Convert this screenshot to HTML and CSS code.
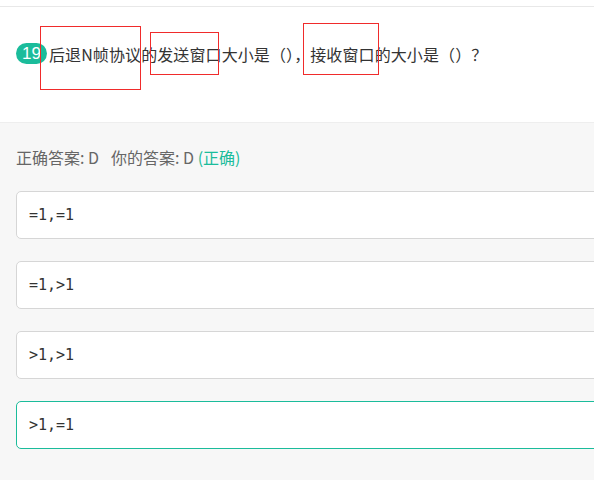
FILE: index.html
```html
<!doctype html>
<html>
  <head>
    <title>答题结果</title>
    <meta http-equiv="Content-Type" content="text/html; charset=utf-8" />
    <link rel="stylesheet" href="styles.css">
  </head>
  <body>
    <div id="page">
      <div class="question">
        <span class="num">19</span>
        <span class="title">后退N帧协议的发送窗口大小是（），接收窗口的大小是（）？</span>
      </div>
      <div class="result">
        <div class="summary">
          正确答案: D<span class="gap"></span>你的答案: D <span class="ok">(正确)</span>
        </div>
        <div class="option">=1,=1</div>
        <div class="option">=1,&gt;1</div>
        <div class="option">&gt;1,&gt;1</div>
        <div class="option picked">&gt;1,=1</div>
      </div>

      <div class="mark mark-1"></div>
      <div class="mark mark-2"></div>
      <div class="mark mark-3"></div>
    </div>
  </body>
</html>
```

FILE: styles.css
```css
* {
  margin: 0px;
  padding: 0px;
  box-sizing: border-box;
}
html,
body {
  overflow: hidden;
}
body {
  background-color: #f7f7f7;
  font-family: "Microsoft YaHei", "Noto Sans CJK SC", sans-serif;
  color: #333;
}
#page {
  position: relative;
  height: 480px;
  padding-top: 6px;
  background: #fff;
}
.question {
  display: flex;
  align-items: center;
  height: 117px;
  padding: 0 16px 22px;
  border-top: 1px solid #e8e8e8;
  border-bottom: 1px solid #eeeeee;
  background: #fff;
}
.num {
  display: inline-block;
  width: 31px;
  height: 21px;
  line-height: 21px;
  margin-right: 2px;
  border-radius: 11px;
  background: #1bbc9b;
  color: #fff;
  font-family: "Liberation Sans", Arial, sans-serif;
  font-size: 17px;
  text-align: center;
}
.title {
  font-size: 16px;
  line-height: 22px;
  white-space: nowrap;
  letter-spacing: 0.1px;
}
.result {
  height: 357px;
  padding: 23px 16px 0;
  background: #f7f7f7;
}
.summary {
  font-size: 16px;
  line-height: 22px;
  color: #666;
  margin-bottom: 23px;
}
.gap {
  display: inline-block;
  width: 12px;
}
.ok {
  color: #1bbc9b;
}
.option {
  width: calc(100% + 40px);
  height: 48px;
  line-height: 46px;
  padding-left: 12px;
  margin-bottom: 22px;
  border: 1px solid #d6d6d6;
  border-radius: 5px;
  background: #fff;
  font-family: "DejaVu Sans Mono", monospace;
  font-size: 15px;
  color: #333;
}
.option.picked {
  border-color: #1bbc9b;
}
.mark {
  position: absolute;
  border: 1px solid #f02b2b;
}
.mark-1 {
  left: 40px;
  top: 26px;
  width: 101px;
  height: 64px;
}
.mark-2 {
  left: 150px;
  top: 32px;
  width: 69px;
  height: 43px;
}
.mark-3 {
  left: 303px;
  top: 23px;
  width: 76px;
  height: 52px;
}
```
